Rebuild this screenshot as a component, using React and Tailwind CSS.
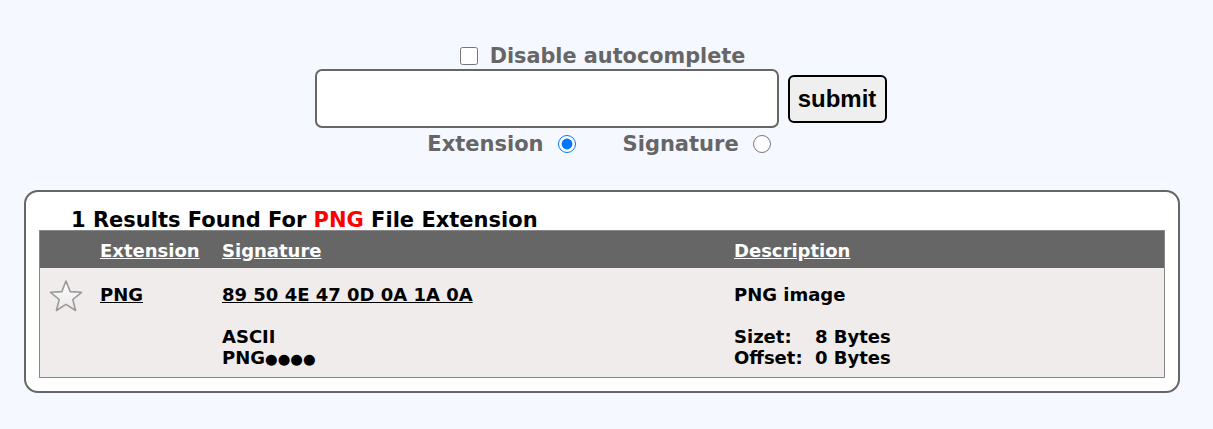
import React from "react";

function Star() {
  return (
    <svg width="36" height="34" viewBox="0 0 36 34">
      <defs>
        <linearGradient id="sg" x1="0" y1="0" x2="0" y2="1">
          <stop offset="0" stopColor="#ffffff" />
          <stop offset="1" stopColor="#e8e8e8" />
        </linearGradient>
      </defs>
      <path
        d="M18 2 L22.2 12.6 L33.5 13.3 L24.8 20.5 L27.6 31.5 L18 25.4 L8.4 31.5 L11.2 20.5 L2.5 13.3 L13.8 12.6 Z"
        fill="url(#sg)"
        stroke="#9a9a9a"
        strokeWidth="1.6"
        strokeLinejoin="round"
      />
    </svg>
  );
}

export default function App() {
  return (
    <div className="min-h-screen bg-[#f5f8ff] font-['DejaVu_Sans',sans-serif] font-bold text-black">
      <div className="flex flex-col items-center pt-[44px] pr-[12px]">
        <label className="flex items-center gap-[12px] text-[20.8px] leading-[24px] text-[#666666] ml-[4px]">
          <input type="checkbox" className="w-[18px] h-[18px] m-0 accent-[#1a73e8]" />
          <span>Disable autocomplete</span>
        </label>
        <div className="flex items-center gap-[9px] mt-[1px]">
          <input
            type="text"
            className="w-[464px] h-[59px] rounded-[7px] border-2 border-[#666666] bg-white outline-none"
          />
          <button className="w-[99px] h-[48px] rounded-[6px] border-2 border-black bg-[#efefef] font-['Liberation_Sans',sans-serif] text-[24px] font-bold text-black">
            submit
          </button>
        </div>
        <div className="flex items-center mt-[4px] text-[21px] leading-[24px] text-[#666666] -ml-[3px]">
          <span>Extension</span>
          <input type="radio" name="t" defaultChecked className="w-[18px] h-[18px] m-0 ml-[14px] accent-[#0075ff]" />
          <span className="ml-[47px]">Signature</span>
          <input type="radio" name="t" className="w-[18px] h-[18px] m-0 ml-[14px]" />
        </div>
      </div>

      <div className="ml-[24px] mr-[33px] mt-[34px] rounded-[14px] border-2 border-[#666666] bg-white px-[13px] pt-[18px] pb-[13px]">
        <div className="pl-[32px] text-[21px] leading-[20px]">
          1 Results Found For <span className="text-[#ff0000]">PNG</span> File Extension
        </div>
        <div className="border border-[#888888]">
          <div className="grid grid-cols-[60px_122px_512px_1fr] h-[37px] items-center bg-[#666666] text-white text-[18px]">
            <div></div>
            <div className="underline pt-[1px]">Extension</div>
            <div className="underline pt-[1px]">Signature</div>
            <div className="underline pt-[1px]">Description</div>
          </div>
          <div className="grid grid-cols-[60px_122px_512px_1fr] bg-[#f0ecec] text-[18px] leading-[21px] pt-[16px] pb-[7px]">
            <div className="pl-[8px] -mt-[5px]">
              <Star />
            </div>
            <div className="underline">PNG</div>
            <div>
              <div className="underline">89 50 4E 47 0D 0A 1A 0A</div>
              <div>&nbsp;</div>
              <div>ASCII</div>
              <div>PNG<span className="text-[14.5px]">●●●●</span></div>
            </div>
            <div>
              <div>PNG image</div>
              <div>&nbsp;</div>
              <div className="flex"><span className="w-[81px]">Sizet:</span><span>8 Bytes</span></div>
              <div className="flex"><span className="w-[81px]">Offset:</span><span>0 Bytes</span></div>
            </div>
          </div>
        </div>
      </div>
    </div>
  );
}
